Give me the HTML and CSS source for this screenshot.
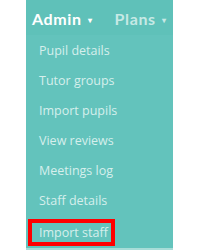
FILE: index.html
```html
<!DOCTYPE html>
<html lang="en">
<head>
<meta charset="UTF-8">
<title>Admin menu</title>
<link rel="stylesheet" href="styles.css">
</head>
<body>

<div id="panel">
    <div id="topbar">
        <span class="tab active">Admin <span class="caret">&#9662;</span></span>
        <span class="tab">Plans <span class="caret">&#9662;</span></span>
    </div>
    <ul id="menu">
        <li>Pupil details</li>
        <li>Tutor groups</li>
        <li>Import pupils</li>
        <li>View reviews</li>
        <li>Meetings log</li>
        <li>Staff details</li>
        <li class="marked">Import staff</li>
    </ul>
</div>

</body>
</html>
```

FILE: styles.css
```css
body {
    margin: 0;
    padding: 0;
    background: #fff;
    font-family: "Open Sans", Arial, sans-serif;
}
#panel {
    margin-left: 26px;
    width: 147px;
    height: 248px;
    background-color: #63c3bc;
    border-bottom: 2px solid #a8ddd8;
}
#topbar {
    display: flex;
    gap: 22px;
    padding: 9px 0 0 6px;
    height: 26px;
    overflow: hidden;
    font-family: "Lato", Arial, sans-serif;
    font-weight: bold;
    font-size: 16px;
    letter-spacing: 0.6px;
    background-color: #5fc1b9;
}
.tab {
    color: #c6e9e5;
    white-space: nowrap;
    flex-shrink: 0;
}
.tab.active {
    color: #fff;
}
.caret {
    font-size: 8px;
    margin-left: 2px;
    vertical-align: 2px;
}
#menu {
    list-style: none;
    margin: 0;
    padding: 4px 0 0 0;
}
#menu li {
    height: 30px;
    line-height: 24px;
    padding-left: 13px;
    font-size: 12.5px;
    color: #d6efec;
}
#menu li.marked {
    margin-left: 2px;
    padding-left: 7px;
    width: 72px;
    height: 19px;
    line-height: 19px;
    border: 4px solid #f00;
}
```
